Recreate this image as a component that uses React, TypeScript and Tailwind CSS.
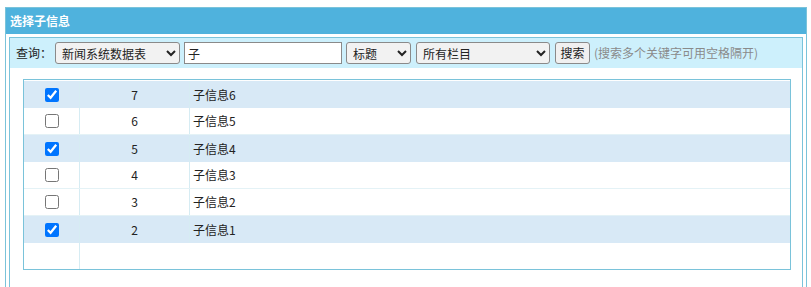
import React from "react";

const rows = [
  { id: 7, title: "子信息6", checked: true },
  { id: 6, title: "子信息5", checked: false },
  { id: 5, title: "子信息4", checked: true },
  { id: 4, title: "子信息3", checked: false },
  { id: 3, title: "子信息2", checked: false },
  { id: 2, title: "子信息1", checked: true },
];

export default function App() {
  return (
    <div
      className="w-[811px] h-[287px] overflow-hidden bg-white pt-[7px]"
      style={{ fontFamily: '"Noto Sans CJK SC", "Noto Sans", sans-serif' }}
    >
      <div className="ml-[5px] w-[802px] border border-[#7ac3da] px-[3px] pb-[3px]">
        <div className="-mx-[3px] h-[26px] bg-[#4fb2dd] pl-[4px] text-[12px] font-bold leading-[26px] text-white">
          选择子信息
        </div>
        <div className="mt-[3px] border border-[#7ac3da] h-[300px]">
          <div className="flex h-[30px] items-center bg-[#cdf0fc] pl-[6px] text-[12px] text-[#222]">
            <span className="mr-[3px]">查询：</span>
            <select
              defaultValue="news"
              className="h-[22px] w-[125px] rounded-[3px] border border-[#8a8a8a] bg-[#f2f2f2] px-[2px] text-[12px] text-[#222]"
            >
              <option value="news">新闻系统数据表</option>
            </select>
            <input
              defaultValue="子"
              className="ml-[4px] h-[22px] w-[158px] border border-[#8a8a8a] bg-white px-[3px] text-[12px] text-[#222] outline-none"
            />
            <select
              defaultValue="title"
              className="ml-[4px] h-[22px] w-[65px] rounded-[3px] border border-[#8a8a8a] bg-[#f2f2f2] px-[2px] text-[12px] text-[#222]"
            >
              <option value="title">标题</option>
            </select>
            <select
              defaultValue="all"
              className="ml-[5px] h-[22px] w-[134px] rounded-[3px] border border-[#8a8a8a] bg-[#f2f2f2] px-[2px] text-[12px] text-[#222]"
            >
              <option value="all">所有栏目</option>
            </select>
            <button className="ml-[5px] h-[22px] w-[35px] rounded-[3px] border border-[#8a8a8a] bg-[#f0f0f0] text-[12px] text-[#222]">
              搜索
            </button>
            <span className="ml-[4px] text-[#8a8a8a]">(搜索多个关键字可用空格隔开)</span>
          </div>
          <div className="ml-[13px] mr-[11px] mt-[11px] border border-[#7ac3da] pt-[1px] text-[12px] text-[#222]">
            {rows.map((r) => (
              <div
                key={r.id}
                className={`flex h-[27px] items-center ${r.checked ? "bg-[#d8e9f6]" : "bg-white border-b border-[#e4f2f6]"}`}
              >
                <div className="flex h-full w-[56px] items-center justify-center border-r border-[#d6ecf3]">
                  <input
                    type="checkbox"
                    defaultChecked={r.checked}
                    className="m-0 h-[14px] w-[14px]"
                  />
                </div>
                <div className="flex h-full w-[110px] items-center justify-center border-r border-[#d6ecf3]">
                  {r.id}
                </div>
                <div className="pl-[3px]">{r.title}</div>
              </div>
            ))}
            <div className="flex h-[26px]">
              <div className="h-full w-[56px] border-r border-[#d6ecf3]" />
              <div className="flex-1" />
            </div>
          </div>
        </div>
      </div>
    </div>
  );
}
